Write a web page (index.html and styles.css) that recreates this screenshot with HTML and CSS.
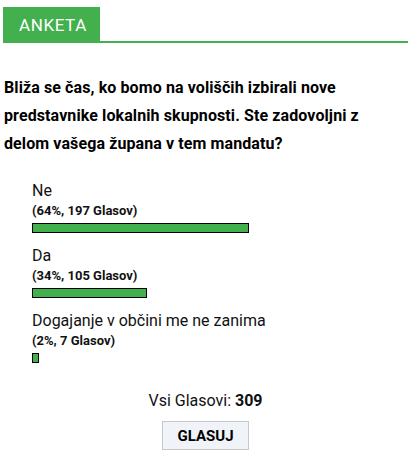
FILE: index.html
```html
<!DOCTYPE html>
<html lang="sl">
<head>
  <meta charset="UTF-8">
  <meta name="viewport" content="width=device-width, initial-scale=1.0">
  <title>Anketa</title>
  <link rel="stylesheet" href="styles.css">
</head>
<body>
  <div class="poll">
    <!-- Naslov -->
    <div class="poll-head">
      <span class="poll-title">ANKETA</span>
    </div>

    <p class="question">Bliža se čas, ko bomo na voliščih izbirali nove predstavnike lokalnih skupnosti. Ste zadovoljni z delom vašega župana v tem mandatu?</p>

    <!-- Odgovori -->
    <ul class="answers">
      <li class="answer">
        <div class="answer-label">Ne</div>
        <div class="answer-count">(64%, 197 Glasov)</div>
        <div class="bar-track"><div class="bar" style="width: 64%"></div></div>
      </li>
      <li class="answer">
        <div class="answer-label">Da</div>
        <div class="answer-count">(34%, 105 Glasov)</div>
        <div class="bar-track"><div class="bar" style="width: 34%"></div></div>
      </li>
      <li class="answer">
        <div class="answer-label">Dogajanje v občini me ne zanima</div>
        <div class="answer-count">(2%, 7 Glasov)</div>
        <div class="bar-track"><div class="bar" style="width: 2%"></div></div>
      </li>
    </ul>

    <div class="poll-foot">
      <div class="total">Vsi Glasovi: <b>309</b></div>
      <button class="vote-btn">GLASUJ</button>
    </div>
  </div>
</body>
</html>
```

FILE: styles.css
```css
body {
  margin: 0;
  padding: 0;
  background: #fff;
  color: #111;
  font-family: Roboto, 'Liberation Sans', sans-serif;
}

.poll {
  padding: 7px 6px 0 3px;
}

/* Naslov */
.poll-head {
  display: flex;
  align-items: flex-end;
  border-bottom: 2px solid #42b04c;
}

.poll-title {
  margin-bottom: -2px;
  background: #42b04c;
  color: #fff;
  font-size: 17px;
  letter-spacing: 0.6px;
  line-height: 36px;
  padding: 0 13px 0 16px;
}

.question {
  margin: 31px 20px 0 1px;
  font-size: 16px;
  font-weight: 700;
  letter-spacing: 0.1px;
  line-height: 28px;
  color: #000;
}

/* Odgovori */
.answers {
  list-style: none;
  margin: 21px 0 0;
  padding: 0 37px 0 29px;
}

.answer {
  margin-bottom: 11px;
}

.answer-label {
  font-size: 16px;
  line-height: 24px;
}

.answer-count {
  font-size: 13px;
  font-weight: 700;
  line-height: 16px;
}

.bar-track {
  margin-top: 4px;
}

.bar {
  box-sizing: border-box;
  height: 10px;
  min-width: 7px;
  background: #42b04c;
  border: 1px solid #000;
}

/* Noga */
.poll-foot {
  display: flex;
  flex-direction: column;
  align-items: center;
  margin-top: 28px;
}

.total {
  font-size: 16px;
  line-height: 20px;
}

.vote-btn {
  margin-top: 10px;
  padding: 0 14px;
  height: 29px;
  font-family: inherit;
  font-size: 15px;
  font-weight: 700;
  color: #000;
  background: #f0f4f8;
  border: 1px solid #c8c8c8;
}
```
